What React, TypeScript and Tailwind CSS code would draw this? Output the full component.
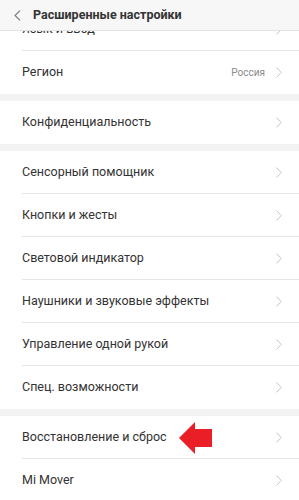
import React from 'react';

type Row = { label: string; value?: string };

const sections: Row[][] = [
  [{ label: 'Язык и ввод' }, { label: 'Регион', value: 'Россия' }],
  [{ label: 'Конфиденциальность' }],
  [
    { label: 'Сенсорный помощник' },
    { label: 'Кнопки и жесты' },
    { label: 'Световой индикатор' },
    { label: 'Наушники и звуковые эффекты' },
    { label: 'Управление одной рукой' },
    { label: 'Спец. возможности' },
  ],
  [{ label: 'Восстановление и сброс' }, { label: 'Mi Mover' }],
];

function Chevron() {
  return (
    <svg width="6" height="11" viewBox="0 0 6 11" fill="none">
      <path d="M0.6 0.6 L5.2 5.5 L0.6 10.4" stroke="#c4c4c4" strokeWidth="1" />
    </svg>
  );
}

function SettingRow({ row, last }: { row: Row; last: boolean }) {
  return (
    <div className="relative flex h-[43px] items-center pl-[22px] pr-[17px]">
      <span className="flex-1 text-[12.5px] text-[#333]">{row.label}</span>
      {row.value && <span className="mr-[11px] text-[10px] text-[#8a8a8a]">{row.value}</span>}
      <Chevron />
      {!last && <div className="absolute bottom-0 left-[22px] right-0 h-px bg-[#e6e6e6]" />}
    </div>
  );
}

export default function App() {
  return (
    <div
      className="relative h-[500px] w-[299px] overflow-hidden bg-white"
      style={{ fontFamily: 'Roboto, "Noto Sans", sans-serif' }}
    >
      {/* Header over the scrolled list */}
      <div className="absolute left-0 right-0 top-0 z-10 flex h-[31px] items-center border-b border-[#e2e2e2] bg-[#f7f7f7]">
        <svg className="ml-[14px]" width="7" height="11" viewBox="0 0 7 11" fill="none">
          <path d="M6 0.6 L1 5.5 L6 10.4" stroke="#777" strokeWidth="1.1" />
        </svg>
        <span className="ml-[12px] text-[12.5px] font-bold text-[#333]">Расширенные настройки</span>
      </div>

      <div className="pt-[7.5px]">
        {sections.map((section, si) => (
          <div key={si}>
            {si > 0 && <div className="h-[7px] bg-[#f2f2f2]" />}
            {section.map((row, ri) => (
              <SettingRow key={row.label} row={row} last={ri === section.length - 1} />
            ))}
          </div>
        ))}
      </div>

      {/* Red arrow pointing at the reset item */}
      <svg className="absolute left-[179px] top-[422px]" width="34" height="32" viewBox="0 0 34 32">
        <path d="M0 16 L16 0 L16 7 L33 7 L33 25 L16 25 L16 32 Z" fill="#e91e27" />
      </svg>
    </div>
  );
}
